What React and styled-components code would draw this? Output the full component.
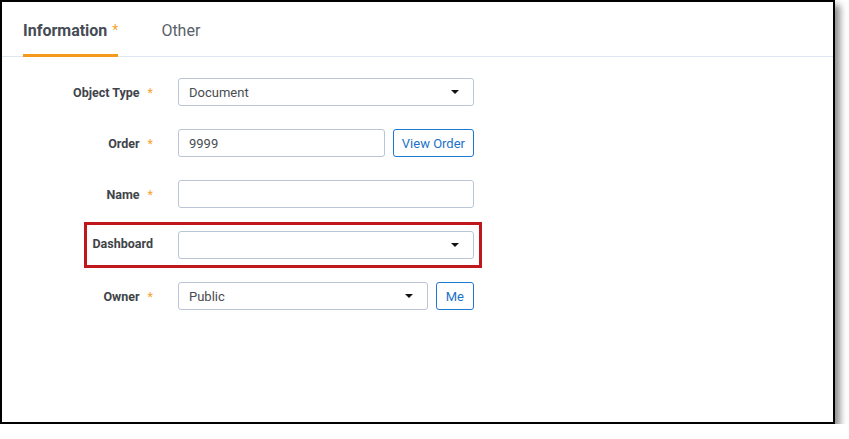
import React from "react";
import styled, { createGlobalStyle } from "styled-components";

const Global = createGlobalStyle`
  html, body { margin: 0; padding: 0; background: #ffffff; }
  body { font-family: Roboto, "Liberation Sans", Arial, sans-serif; }
`;

const Frame = styled.div`
  box-sizing: border-box;
  width: 835px;
  height: 424px;
  border: 2px solid #000;
  background: #fff;
  box-shadow: 5px 5px 7px rgba(0, 0, 0, 0.45);
`;

const TabBar = styled.div`
  display: flex;
  align-items: stretch;
  height: 54px;
  padding-left: 21px;
  gap: 43px;
  border-bottom: 1px solid #dde6f1;
`;

const Tab = styled.div`
  display: flex;
  align-items: center;
  padding-top: 4px;
  font-size: 16px;
  font-weight: ${(p) => (p.$active ? 700 : 400)};
  color: ${(p) => (p.$active ? "#464c55" : "#5a6169")};
  border-bottom: 3px solid ${(p) => (p.$active ? "#f39a1e" : "transparent")};
  margin-bottom: -1px;
`;

const TabStar = styled.span`
  color: #f5a331;
  font-weight: 400;
  font-size: 14px;
  margin-left: 5px;
`;

const Form = styled.div`
  display: flex;
  flex-direction: column;
  gap: 23px;
  padding-top: 21px;
`;

const Row = styled.div`
  position: relative;
  display: flex;
  align-items: center;
  gap: 25px;
  height: 28px;
  ${(p) =>
    p.$highlight &&
    `
    &::after {
      content: "";
      position: absolute;
      left: 82px;
      top: -9px;
      width: 398px;
      height: 46px;
      box-sizing: border-box;
      border: 3px solid #c0171d;
      pointer-events: none;
    }
  `}
`;

const Label = styled.div`
  width: 151px;
  text-align: right;
  font-size: 12.5px;
  font-weight: 700;
  color: #404448;
  white-space: nowrap;
  margin-top: ${(p) => (p.$plain ? "-3px" : "0")};
`;

const Star = styled.span`
  color: #f5a331;
  font-weight: 400;
  margin-left: 8px;
`;

const Controls = styled.div`
  display: flex;
  align-items: center;
  gap: 8px;
  width: 296px;
`;

const Field = styled.div`
  box-sizing: border-box;
  flex: 1;
  height: 28px;
  display: flex;
  align-items: center;
  justify-content: space-between;
  padding: 0 14px 0 10px;
  border: 1px solid #bac6d6;
  border-radius: 3px;
  background: #fff;
  font-size: 13px;
  color: #484c50;
`;

const Caret = styled.span`
  width: 0;
  height: 0;
  border-left: ${(p) => p.$size}px solid transparent;
  border-right: ${(p) => p.$size}px solid transparent;
  border-top: ${(p) => p.$size}px solid #111;
`;

const Button = styled.button`
  box-sizing: border-box;
  height: 28px;
  padding: 0 ${(p) => p.$pad}px;
  background: #fff;
  border: 1px solid #1f78d1;
  border-radius: 3px;
  color: #1b72c8;
  font-family: Roboto, "Liberation Sans", Arial, sans-serif;
  font-size: 13px;
  cursor: pointer;
`;

export default function App() {
  return (
    <>
      <Global />
      <Frame>
        <TabBar>
          <Tab $active>
            Information<TabStar>*</TabStar>
          </Tab>
          <Tab>Other</Tab>
        </TabBar>
        <Form>
          <Row>
            <Label>
              Object Type<Star>*</Star>
            </Label>
            <Controls>
              <Field>
                Document
                <Caret $size={4.5} />
              </Field>
            </Controls>
          </Row>
          <Row>
            <Label>
              Order<Star>*</Star>
            </Label>
            <Controls>
              <Field>9999</Field>
              <Button $pad={8}>View Order</Button>
            </Controls>
          </Row>
          <Row>
            <Label>
              Name<Star>*</Star>
            </Label>
            <Controls>
              <Field />
            </Controls>
          </Row>
          <Row $highlight>
            <Label $plain>Dashboard</Label>
            <Controls>
              <Field>
                <span />
                <Caret $size={4} />
              </Field>
            </Controls>
          </Row>
          <Row>
            <Label>
              Owner<Star>*</Star>
            </Label>
            <Controls>
              <Field>
                Public
                <Caret $size={4} />
              </Field>
              <Button $pad={9}>Me</Button>
            </Controls>
          </Row>
        </Form>
      </Frame>
    </>
  );
}
